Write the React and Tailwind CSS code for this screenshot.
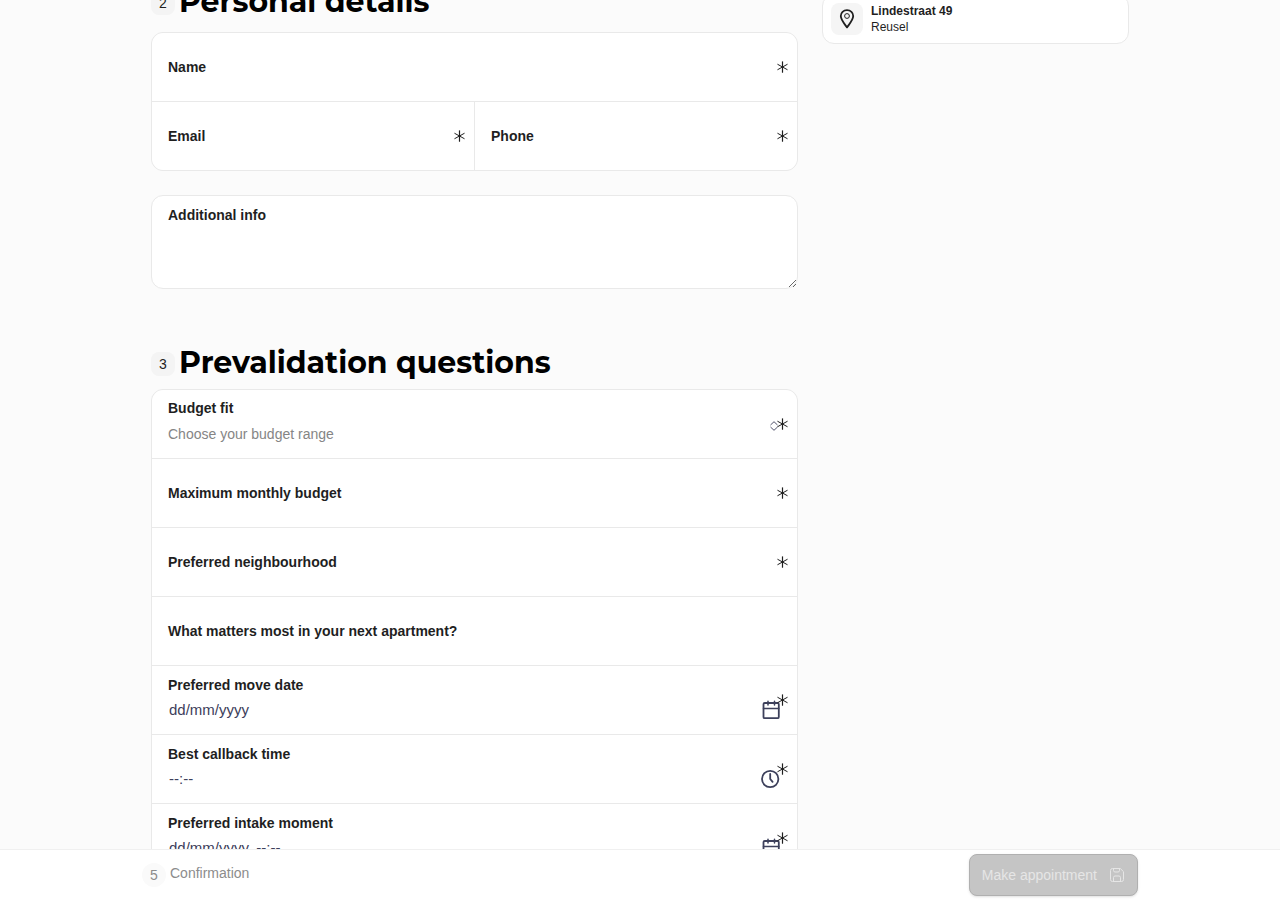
import React from 'react';

function Asterisk() {
  return (
    <svg
      aria-hidden="true"
      viewBox="0 0 12 12"
      className="pointer-events-none absolute top-1/2 right-[9px] size-3 -translate-y-1/2 text-[#1f1f1f]"
      fill="none"
      stroke="currentColor"
      strokeWidth="1"
      strokeLinecap="round"
    >
      <path strokeWidth="1.2" d="M6.5 0.8v10.4" />
      <path d="M1.8 3.4l9.4 5.2M11.2 3.4L1.8 8.6" />
    </svg>
  );
}

function CalendarIcon() {
  return (
    <svg aria-hidden="true" viewBox="0 0 20 20" className="size-5 text-[#3d405b]" fill="none" stroke="currentColor" strokeWidth="1.8" strokeLinecap="round" strokeLinejoin="round">
      <rect x="2.5" y="3" width="15.3" height="15.2" rx="1.3" />
      <path strokeWidth="1.5" d="M2.5 8.5h15.3M7 1.2v3.8M13.5 1.2v3.8" />
    </svg>
  );
}

function ClockIcon() {
  return (
    <svg aria-hidden="true" viewBox="0 0 20 20" className="size-5 text-[#3d405b]" fill="none" stroke="currentColor" strokeWidth="1.8" strokeLinecap="round" strokeLinejoin="round">
      <circle cx="9.2" cy="10" r="8.2" />
      <path d="M9.2 5v5l2.4 2.9" />
    </svg>
  );
}

function SelectIcon() {
  return (
    <svg aria-hidden="true" viewBox="0 0 8 10" className="h-[10px] w-2 text-[#3d405b]" fill="none" stroke="currentColor" strokeWidth="0.9">
      <path d="M0.5 4L4 0.7L7.5 4M0.5 6L4 9.3L7.5 6" />
    </svg>
  );
}

function StepHeading({ step, children }) {
  return (
    <div className="flex h-10 items-center gap-1">
      <span className="mt-[2px] flex size-6 shrink-0 items-center justify-center rounded-lg bg-[#f4f4f4] text-sm text-[#1f1f1f]">{step}</span>
      <h2 className="font-[Montserrat,Inter,sans-serif] text-[30px] leading-10 font-bold text-black">{children}</h2>
    </div>
  );
}

/* Bordered card; the one-pixel grid gaps show through as separators. */
function FieldGroup({ children }) {
  return <div className="grid gap-px overflow-hidden rounded-xl border border-[#e9e9e9] bg-[#e9e9e9]">{children}</div>;
}

function TextField({ id, label, type = 'text', required = true }) {
  return (
    <div className="relative flex min-h-[68px] items-center bg-white px-4">
      <label htmlFor={id} className="font-bold">{label}</label>
      <input id={id} type={type} required={required} className="absolute inset-0 size-full bg-transparent px-4 pt-4 outline-none" />
      {required && <Asterisk />}
    </div>
  );
}

/* Field with its label above a value and an icon at the right edge. */
function PickerField({ id, label, placeholder, icon }) {
  return (
    <div className="relative min-h-[68px] bg-white px-4 pt-[9px]">
      <label htmlFor={id} className="block leading-5 font-bold">{label}</label>
      <div className="mt-[3px] flex h-6 items-center">
        <input id={id} type="text" required placeholder={placeholder} className="min-w-0 flex-1 bg-transparent px-px text-[15px] text-[#3d405b] outline-none placeholder:text-[#3d405b]" />
        {icon}
      </div>
      <Asterisk />
    </div>
  );
}

export default function App() {
  return (
    <div className="flex h-screen flex-col bg-[#fbfbfb] font-['Liberation_Sans',Arial,sans-serif] text-sm text-[#1f1f1f]">
      <main className="min-h-0 flex-1 overflow-y-auto [scrollbar-width:none]">
        <div className="mx-auto grid max-w-[978px] grid-cols-[minmax(0,1fr)_307px] items-start gap-6">
          <form id="booking" className="-mt-[18px]">
            <StepHeading step="2">Personal details</StepHeading>
            <div className="mt-[10px]">
              <FieldGroup>
                <TextField id="name" label="Name" />
                <div className="grid grid-cols-2 gap-px">
                  <TextField id="email" label="Email" type="email" />
                  <TextField id="phone" label="Phone" type="tel" />
                </div>
              </FieldGroup>
            </div>

            <div className="relative mt-6">
              <label htmlFor="info" className="absolute top-[10px] left-[17px] leading-5 font-bold">Additional info</label>
              <textarea id="info" className="block h-[94px] w-full resize-y rounded-xl border border-[#e9e9e9] bg-white px-4 pt-8 outline-none" />
            </div>

            <div className="mt-[54px] mb-[6px]">
              <StepHeading step="3">Prevalidation questions</StepHeading>
            </div>
            <FieldGroup>
              <div className="relative min-h-[68px] bg-white px-4 pt-2">
                <label htmlFor="budget" className="block leading-5 font-bold">Budget fit</label>
                <select id="budget" required defaultValue="" className="mt-[6px] block h-5 w-full appearance-none bg-transparent leading-5 text-[#858585] outline-none">
                  <option value="">Choose your budget range</option>
                </select>
                <span className="pointer-events-none absolute top-1/2 right-[19px] -translate-y-1/2 pt-1">
                  <SelectIcon />
                </span>
                <Asterisk />
              </div>
              <TextField id="max" label="Maximum monthly budget" />
              <TextField id="area" label="Preferred neighbourhood" />
              <TextField id="matters" label="What matters most in your next apartment?" required={false} />
              <PickerField id="date" label="Preferred move date" placeholder="dd/mm/yyyy" icon={<CalendarIcon />} />
              <PickerField id="time" label="Best callback time" placeholder="--:--" icon={<ClockIcon />} />
              <PickerField id="intake" label="Preferred intake moment" placeholder="dd/mm/yyyy, --:--" icon={<CalendarIcon />} />
            </FieldGroup>
          </form>

          <aside className="-mt-[6px] flex items-center gap-2 rounded-xl border border-[#e9e9e9] bg-white p-2 text-xs leading-4">
            <span className="flex size-8 shrink-0 items-center justify-center rounded-lg bg-[#f5f5f5]">
              <svg aria-hidden="true" viewBox="0 0 16 20" className="h-5 w-4" fill="none" stroke="#1f1f1f" strokeLinejoin="round">
                <path strokeWidth="1.8" d="M8 1.2C4.4 1.2 1.8 3.8 1.8 7.1C1.8 10.8 5 14.2 8 18.4C11 14.2 14.2 10.8 14.2 7.1C14.2 3.8 11.6 1.2 8 1.2Z" />
                <circle cx="8" cy="7" r="2.4" strokeWidth="1" />
              </svg>
            </span>
            <div>
              <p className="font-bold">Lindestraat 49</p>
              <p>Reusel</p>
            </div>
          </aside>
        </div>
      </main>

      <footer className="border-t border-[#f0f0f0] bg-white py-1">
        <div className="mx-auto flex max-w-[996px] items-center justify-between">
          <div className="flex items-start gap-1 leading-5 text-[#8c8c8c]">
            <span className="flex size-6 items-center justify-center rounded-full bg-[#fafafa]">5</span>
            <span>Confirmation</span>
          </div>
          <button
            type="submit"
            form="booking"
            disabled
            className="flex h-[42px] items-center gap-3 rounded-lg border border-[#b0b0b0] bg-[#c5c5c5] px-3 text-[#e6e6e6] shadow-sm"
          >
            Make appointment
            <svg aria-hidden="true" viewBox="0 0 16 16" className="size-4" fill="none" stroke="currentColor" strokeWidth="1" strokeLinejoin="round">
              <path d="M3.5 1.5h7.8l3.2 3.2v7.8a2 2 0 0 1-2 2h-9a2 2 0 0 1-2-2v-9a2 2 0 0 1 2-2z" />
              <path d="M4.5 1.5v2a1.5 1.5 0 0 0 1.5 1.5h3a1.5 1.5 0 0 0 1.5-1.5v-2M4.5 14.5v-4a1.5 1.5 0 0 1 1.5-1.5h4a1.5 1.5 0 0 1 1.5 1.5v4" />
            </svg>
          </button>
        </div>
      </footer>
    </div>
  );
}
